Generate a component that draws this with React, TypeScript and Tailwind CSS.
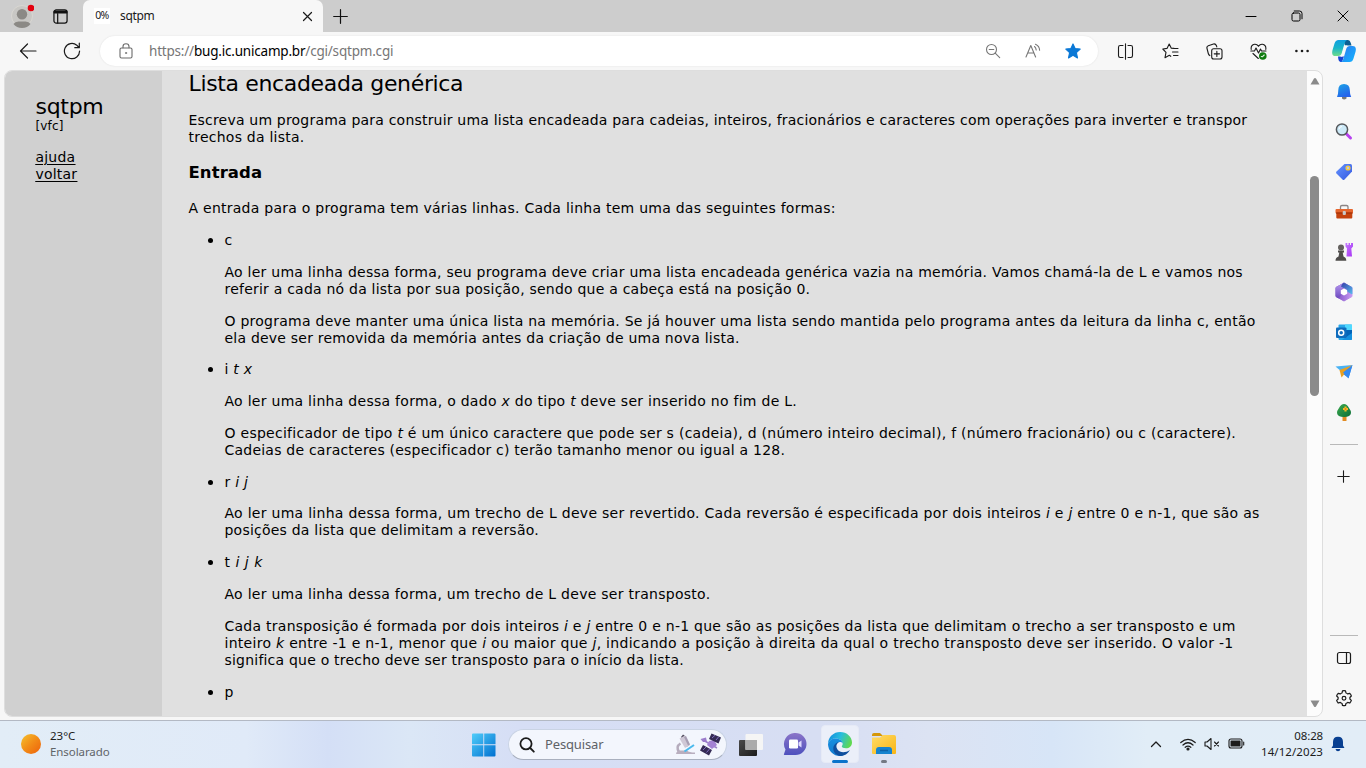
import React from "react";

type IconProps = { children: React.ReactNode; size?: number; box?: string; className?: string; sw?: number };

function Icon({ children, size = 16, box = "0 0 16 16", className = "", sw = 1.1 }: IconProps) {
  return (
    <svg
      width={size}
      height={size}
      viewBox={box}
      className={`shrink-0 ${className}`}
      fill="none"
      stroke="currentColor"
      strokeWidth={sw}
      strokeLinecap="round"
      strokeLinejoin="round"
    >
      {children}
    </svg>
  );
}

function TitleBar() {
  return (
    <div className="flex h-8 shrink-0 bg-[#cdcdcd]">
      <div className="flex w-[44px] items-center justify-center">
        <svg width="24" height="28" viewBox="0 0 24 28">
          <circle cx="12" cy="14" r="10.5" fill="#c8c7c4" stroke="#d9d7d2" />
          <circle cx="12" cy="12.3" r="5.2" fill="#8b8985" />
          <path d="M3.5 22Q5 19.500 8.500 19.500H15.500Q19 19.500 20.500 22Q17.500 26 12 26T3.500 22Z" fill="#8b8985" />
          <circle cx="21" cy="6" r="3.300" fill="#e3000f" />
        </svg>
      </div>
      <div className="flex w-[39px] items-center pl-[9px] text-[#111]">
        <Icon size={15} sw={1.3}>
          <rect x="1" y="1" width="14" height="14" rx="2.500" />
          <path d="M1.500 2.600H14.500M1.500 3.800H14.500" strokeWidth="2" />
          <path d="M5 5V15" />
        </Icon>
      </div>
      <div className="flex w-[240px] items-center rounded-t-[7px] bg-[#f7f7f7] pl-[11px] pr-[10px] text-[12px] text-[#1a1a1a]">
        <span className="flex h-4 w-4 items-center justify-center bg-white font-['Noto_Sans'] text-[10.500px] tracking-[-0.6px]">0%</span>
        <span className="ml-[10px] grow tracking-[-0.350px]">sqtpm</span>
        <Icon size={11} box="0 0 11 11" sw={1.200}>
          <path d="M1.500 1.500L9.500 9.500M9.500 1.500L1.500 9.500" />
        </Icon>
      </div>
      <div className="flex grow items-center pl-[10px] text-[#111]">
        <Icon size={15} box="0 0 15 15" sw={1.200}>
          <path d="M7.500 .7V14.300M.7 7.500H14.300" />
        </Icon>
      </div>
      <div className="flex items-center text-black">
        <div className="flex w-[46px] justify-center">
          <Icon size={12} box="0 0 12 12" sw={1}><path d="M1 6.500H11" /></Icon>
        </div>
        <div className="flex w-[46px] justify-center">
          <Icon size={12} box="0 0 12 12" sw={1}>
            <rect x="1" y="3" width="8" height="8" rx="1.500" />
            <path d="M3.200 1H8.500Q11 1 11 3.500V8.800" />
          </Icon>
        </div>
        <div className="flex w-[46px] justify-center">
          <Icon size={12} box="0 0 12 12" sw={1}><path d="M1 1L11 11M11 1L1 11" /></Icon>
        </div>
      </div>
    </div>
  );
}

function Cell({ w = "w-[44px]", children }: { w?: string; children: React.ReactNode }) {
  return <div className={`flex ${w} shrink-0 items-center justify-center`}>{children}</div>;
}

function CopilotLogo() {
  return (
    <svg width="24" height="24" viewBox="0 0 24 24" className="shrink-0">
      <defs>
        <linearGradient id="cpa" x1="0" y1="0" x2="0" y2="1">
          <stop offset="0" stopColor="#109fe0" />
          <stop offset=".5" stopColor="#19b5c9" />
          <stop offset="1" stopColor="#6fdc8a" />
        </linearGradient>
        <linearGradient id="cpb" x1="0" y1="0" x2="1" y2="1">
          <stop offset="0" stopColor="#2d7bf0" />
          <stop offset="1" stopColor="#12b4ff" />
        </linearGradient>
      </defs>
      <path d="M11 1H16Q18 1 18.800 4L19.500 6.500H13Z" fill="#0b5f93" />
      <path d="M6 17.500H12L10 23H8.500Q6.800 23 6.300 20Z" fill="#1745d4" />
      <path d="M6.500 1H15Q13.300 1.500 12.500 4.500L9.800 14Q9 17 6 17H3.500Q-.8 17 .4 11.500L2.500 4.500Q3.500 1 6.500 1Z" fill="url(#cpa)" />
      <path d="M17.500 23H9Q10.700 22.500 11.500 19.500L14.200 10Q15 7 18 7H20.500Q24.800 7 23.600 12.500L21.500 19.500Q20.500 23 17.500 23Z" fill="url(#cpb)" />
      <path d="M12.500 6.500H15.500Q14 7.500 13.300 10L11.600 16Q11 17.700 9.500 17.700H8.300Q9.300 17 10 14.500Z" fill="#f5fafc" />
    </svg>
  );
}

function Toolbar() {
  return (
    <div className="flex h-[38px] shrink-0 items-center bg-[#f7f7f7] pl-[6px] text-[#1b1b1b]">
      <Cell><Icon size={18} box="0 0 18 18" sw={1.200}><path d="M17 9H1.500M8.500 2L1.500 9L8.500 16" /></Icon></Cell>
      <Cell>
        <Icon size={18} box="0 0 18 18" sw={1.200}>
          <path d="M16.600 9A7.600 7.600 0 1 1 13.800 3.200L15.900 5.500M16.300 1.200V5.700H11.800" />
        </Icon>
      </Cell>
      <div className="ml-[6px] flex h-[30px] w-[998px] shrink-0 items-center rounded-full bg-white pl-[18px] pr-[5px] shadow-[0_0_2px_rgba(0,0,0,0.1)]">
        <Icon size={16} className="text-[#6b6b6b]">
          <rect x="2" y="5" width="12" height="10" rx="1.500" />
          <path d="M5 4.700V3.500Q5 .7 8 .7T11 3.500V4.700" />
          <circle cx="8" cy="10" r=".7" fill="currentColor" strokeWidth=".5" />
        </Icon>
        <span className="ml-[15px] grow whitespace-nowrap text-[13.500px] tracking-[-0.200px] text-[#767676]">
          https://<span className="text-black">bug.ic.unicamp.br</span>/cgi/sqtpm.cgi
        </span>
        <Cell w="w-[40px]">
          <Icon className="text-[#777]"><circle cx="6.500" cy="6.500" r="5" /><path d="M4.200 6.500H8.800M10.200 10.200L14.700 14.700" /></Icon>
        </Cell>
        <Cell w="w-[40px]">
          <Icon className="text-[#777]">
            <path d="M1 14L5.800 2.500L10.600 14M2.600 10H9M9.500 3.500Q11 4.700 11.200 7M10.500 1.200Q14.500 3 14.600 7.200" />
          </Icon>
        </Cell>
        <Cell w="w-[40px]">
          <Icon className="text-[#0a78d6]"><path fill="currentColor" d="M8 .9L10.100 5.500L15.200 6.100L11.400 9.600L12.500 14.900L8 12.300L3.500 14.900L4.600 9.600L.8 6.100L5.900 5.500Z" /></Icon>
        </Cell>
      </div>
      <div className="ml-[6px] flex">
        <Cell w="w-[43px]">
          <Icon size={17} box="0 0 17 17"><path d="M6 2.500H3.200Q1.500 2.500 1.500 4.200V12.800Q1.500 14.500 3.200 14.500H6M11 2.500H13.800Q15.500 2.500 15.500 4.200V12.800Q15.500 14.500 13.800 14.500H11M8.500 .7V16.300" /></Icon>
        </Cell>
        <Cell w="w-[45px]">
          <Icon size={17} box="0 0 17 17" className="ml-px">
            <path d="M12 5.400L9.300 5.200L7.200 1L5 5.400L.8 6L4 9.300L3 14.700L7.300 12.300L8.800 13.300M11.500 5.500H16M10.500 9H16M11.500 12.500H16" />
          </Icon>
        </Cell>
        <Cell>
          <Icon size={17} box="0 0 17 17">
            <rect x="5.700" y="5.700" width="10.300" height="10.300" rx="2" />
            <path d="M10.850 8.200V13.500M8.200 10.850H13.500M3.800 12.600Q2.700 12 2.300 10.500L.9 5Q.6 3.300 2.300 2.700L7.500 1Q9.500 .5 10.500 2.800L10.800 3.900" />
          </Icon>
        </Cell>
        <Cell>
          <Icon size={17} box="0 0 17 17">
            <path d="M1.200 6.500Q.6 2 4.500 1.300Q7 1 8.500 3.300Q10 1 12.500 1.300Q16.400 2 15.800 6.500M.8 8H4.500L6 5L8.500 10L10.500 6L11.500 8H16M3 10.500L8.300 15.500" />
            <circle cx="12.800" cy="13" r="3.800" fill="#107c10" stroke="none" />
            <path d="M11.300 13.500L12.300 13.800L14.200 12" stroke="#dff0df" />
          </Icon>
        </Cell>
        <Cell>
          <Icon><g fill="currentColor" stroke="none"><circle cx="2.400" cy="8" r="1.300" /><circle cx="8" cy="8" r="1.300" /><circle cx="13.600" cy="8" r="1.300" /></g></Icon>
        </Cell>
        <Cell w="w-[40px]"><CopilotLogo /></Cell>
      </div>
    </div>
  );
}

const p = "mb-[15px] whitespace-nowrap";
const tight = "mb-[14px] whitespace-nowrap";

function Article() {
  return (
    <div className="grow overflow-hidden bg-[#e0e0e0] pl-[26.500px] text-[14px] leading-[17px] tracking-[0.250px] text-black">
      <h1 className="-mt-px mb-[14px] text-[22px] leading-[28px] tracking-[-0.350px]">Lista encadeada genérica</h1>
      <p className="mb-[17px] whitespace-nowrap tracking-[0.200px]">
        Escreva um programa para construir uma lista encadeada para cadeias, inteiros, fracionários e caracteres com operações para inverter e transpor<br />
        <span className="tracking-[0.240px]">trechos da lista.</span>
      </p>
      <h2 className="mb-[17px] text-[16.500px] font-bold leading-[20px] tracking-[0.080px]">Entrada</h2>
      <p className={p}>A entrada para o programa tem várias linhas. Cada linha tem uma das seguintes formas:</p>
      <ul className="list-disc pl-[36px] marker:text-[17px] [&>li]:-mt-px">
        <li>
          <p className={p}>c</p>
          <p className={p}>
            Ao ler uma linha dessa forma, seu programa deve criar uma lista encadeada genérica vazia na memória. Vamos chamá-la de L e vamos nos<br />
            <span className="tracking-[0.220px]">referir a cada nó da lista por sua posição, sendo que a cabeça está na posição 0.</span>
          </p>
          <p className={tight}>
            O programa deve manter uma única lista na memória. Se já houver uma lista sendo mantida pelo programa antes da leitura da linha c, então<br />
            <span className="tracking-[0.220px]">ela deve ser removida da memória antes da criação de uma nova lista.</span>
          </p>
        </li>
        <li>
          <p className={p}>i <i>t x</i></p>
          <p className={`${p} tracking-[0.275px]`}>Ao ler uma linha dessa forma, o dado <i>x</i> do tipo <i>t</i> deve ser inserido no fim de L.</p>
          <p className={p}>
            <span className="tracking-[0.268px]">O especificador de tipo <i>t</i> é um único caractere que pode ser s (cadeia), d (número inteiro decimal), f (número fracionário) ou c (caractere).</span><br />
            <span className="tracking-[0.220px]">Cadeias de caracteres (especificador c) terão tamanho menor ou igual a 128.</span>
          </p>
        </li>
        <li>
          <p className={tight}>r <i>i j</i></p>
          <p className={p}>
            <span className="tracking-[0.280px]">Ao ler uma linha dessa forma, um trecho de L deve ser revertido. Cada reversão é especificada por dois inteiros <i>i</i> e <i>j</i> entre 0 e n-1, que são as</span><br />
            <span className="tracking-[0.220px]">posições da lista que delimitam a reversão.</span>
          </p>
        </li>
        <li>
          <p className={`${p} tracking-[0.500px]`}>t <i>i j k</i></p>
          <p className={`${p} tracking-[0.265px]`}>Ao ler uma linha dessa forma, um trecho de L deve ser transposto.</p>
          <p className={p}>
            <span className="tracking-[0.257px]">Cada transposição é formada por dois inteiros <i>i</i> e <i>j</i> entre 0 e n-1 que são as posições da lista que delimitam o trecho a ser transposto e um</span><br />
            <span className="tracking-[0.290px]">inteiro <i>k</i> entre -1 e n-1, menor que <i>i</i> ou maior que <i>j</i>, indicando a posição à direita da qual o trecho transposto deve ser inserido. O valor -1</span><br />
            <span className="tracking-[0.210px]">significa que o trecho deve ser transposto para o início da lista.</span>
          </p>
        </li>
        <li><p className={p}>p</p></li>
      </ul>
    </div>
  );
}

function Page() {
  return (
    <div className="ml-1 mb-[3px] flex w-[1319px] shrink-0 overflow-hidden rounded-[8px] border border-[#dedede] bg-[#fcfcfc] font-['DejaVu_Sans',sans-serif]">
      <div className="w-[157px] shrink-0 bg-[#d0d0d0] pl-[30.500px] pt-[22px] text-black">
        <div className="text-[22px] leading-[28px] tracking-[-0.300px]">sqtpm</div>
        <div className="-mt-px text-[12px] leading-[12px] tracking-[0.150px]">[vfc]</div>
        <div className="mt-[17px] flex flex-col items-start text-[14px] leading-[17px] tracking-[0.200px] underline underline-offset-2">
          <a>ajuda</a>
          <a>voltar</a>
        </div>
      </div>
      <Article />
      <div className="flex w-[15px] shrink-0 flex-col items-center justify-between pb-[8px] pt-[6px]">
        <svg width="10" height="8" viewBox="0 0 10 8"><path d="M.5 7.500L4 1.500Q5 .3 6 1.500L9.500 7.500Z" fill="#8b8b8b" /></svg>
        <div className="mt-[91px] mb-auto h-[220px] w-[9px] rounded-full bg-[#8b8b8b]" />
        <svg width="10" height="8" viewBox="0 0 10 8"><path d="M.5 .5L4 6.500Q5 7.700 6 6.500L9.500 .5Z" fill="#8b8b8b" /></svg>
      </div>
    </div>
  );
}

function Sidebar() {
  return (
    <div className="flex grow flex-col items-center pt-[2px] pr-px text-[#1b1b1b]">
      <svg width="20" height="360" viewBox="0 0 20 360" className="shrink-0">
        <defs>
          <linearGradient id="bell" x1="0" y1="0" x2=".5" y2="1"><stop stopColor="#1ca5e6" /><stop offset="1" stopColor="#2563eb" /></linearGradient>
          <linearGradient id="tag" x1="0" y1="0" x2="1" y2="1"><stop stopColor="#6594ff" /><stop offset="1" stopColor="#3558e0" /></linearGradient>
          <linearGradient id="rook" x1="0" y1="0" x2="1" y2="1"><stop stopColor="#c37bff" /><stop offset="1" stopColor="#a832f4" /></linearGradient>
          <linearGradient id="m1" x1="0" y1="0" x2="0" y2="1"><stop stopColor="#b79af0" /><stop offset="1" stopColor="#6f4cc0" /></linearGradient>
          <linearGradient id="m2" x1="0" y1="0" x2="1" y2="1"><stop stopColor="#3440a8" /><stop offset="1" stopColor="#55b9ed" /></linearGradient>
          <linearGradient id="m3" x1="0" y1="0" x2="1" y2="0"><stop stopColor="#7a4cc4" /><stop offset="1" stopColor="#c89af2" /></linearGradient>
          <linearGradient id="tree" x1="0" y1="0" x2="1" y2="1"><stop stopColor="#3caa50" /><stop offset="1" stopColor="#0b6e35" /></linearGradient>
        </defs>
        <g>
          <path d="M8 26.500Q10 28.500 12.500 26.500V25H8Z" fill="#777" />
          <path d="M3 25Q4.300 22 4.300 18Q4.300 12 10 12T15.800 18Q15.800 22 17.200 25Z" fill="url(#bell)" />
        </g>
        <g>
          <path d="M12 61.500L16.500 66" stroke="#b741ef" strokeWidth="3" strokeLinecap="round" />
          <circle cx="8" cy="57.500" r="5.600" fill="#cdeaf8" stroke="#55585c" strokeWidth="1.500" />
          <path d="M5 57Q5.500 54.500 8 54.500" stroke="#fff" fill="none" />
        </g>
        <g>
          <path d="M10.500 92H16.500Q18 92 18 93.500V99.500L10.500 107.500Q9.500 108.500 8.500 107.500L2.500 101.500Q1.500 100.500 2.500 99.500Z" fill="url(#tag)" />
          <circle cx="14" cy="96" r="1.900" fill="#b9c6f0" stroke="#f6cb3d" strokeWidth="1.400" />
        </g>
        <g>
          <path d="M6.500 137V134.800Q6.500 133.500 8 133.500H12.500Q14 133.500 14 134.800V137" fill="none" stroke="#8b8585" strokeWidth="1.300" />
          <rect x="1.500" y="137" width="17.500" height="4.500" rx="1" fill="#e6662e" />
          <rect x="2.300" y="140.500" width="16" height="6" rx="1" fill="#c4420e" />
          <path d="M2 141H18.500" stroke="#992c07" />
          <rect x="8.700" y="139" width="3.200" height="4" rx="1" fill="#c9c9c9" />
        </g>
        <g>
          <path d="M11.500 171V174.500L13 176.500L12.500 184.500H18L17.300 176.500L19 174.500V171H17V173H16V171H14.500V173H13.300V171Z" fill="url(#rook)" />
          <circle cx="7" cy="175.500" r="3" fill="#63605e" />
          <path d="M4 178.500H10V180.500H8.700L9.500 184.500Q12.300 185.500 12.300 188.800H1.500Q1.500 185.500 4.500 184.500L5.300 180.500H4Z" fill="#4e4c4a" />
        </g>
        <g>
          <path d="M10 211L18 215.500V224.500L10 229L2 224.500V215.500Z" fill="url(#m3)" stroke="url(#m3)" strokeWidth="1" strokeLinejoin="round" />
          <path d="M10 211L2 215.500V224.500L4.500 226L7 223V217L11.500 214Z" fill="url(#m1)" stroke="url(#m1)" strokeWidth=".8" strokeLinejoin="round" />
          <path d="M8.500 212L10 211L18 215.500V222L13 219V217L7.500 214.500Z" fill="url(#m2)" stroke="url(#m2)" strokeWidth=".8" strokeLinejoin="round" />
          <path d="M10 216.400L13.200 218.200V221.800L10 223.600L6.800 221.800V218.200Z" fill="#fff" />
        </g>
        <g>
          <rect x="4.500" y="252.500" width="13.500" height="15.500" rx="1" fill="#28a8ea" />
          <path d="M11 252.500H18V258H11Z" fill="#50d9ff" /><path d="M11 258H18V263L11 267Z" fill="#0364b8" />
          <path d="M8 268L18 261V267Q18 268 17 268Z" fill="#1490df" />
          <rect x="2" y="255.500" width="10.500" height="10.500" rx="1" fill="#0f6cbd" />
          <circle cx="7.200" cy="260.700" r="2.500" fill="none" stroke="#fff" strokeWidth="1.500" />
        </g>
        <g>
          <path d="M1.500 294.500L18.500 293L8 300Z" fill="#49b2f4" />
          <path d="M8 300L18.500 293L14.500 306L8.500 301.500Z" fill="#2785e8" />
          <path d="M5.500 298L18 293.300L7.500 305.500Z" fill="#e9a020" />
          <path d="M9 300.500L18.300 293.300L14.500 306.500Z" fill="#3389f1" />
        </g>
        <g>
          <rect x="8.500" y="344" width="4" height="5" rx=".6" fill="#e28b21" />
          <path d="M10 332Q13 332.200 15 336Q17 338.500 17 341Q16.500 345 10 345T3 341Q3 338.500 5 336Q7 332.200 10 332Z" fill="url(#tree)" />
          <path d="M11.500 334.500V339.500M9 337H14" stroke="#f5b824" strokeWidth="2.200" />
          <circle cx="11.500" cy="337" r=".8" fill="#cf6923" />
        </g>
      </svg>
      <div className="mt-[12px] h-px w-[28px] shrink-0 bg-[#b9b9b9]" />
      <Icon size={13} box="0 0 13 13" className="mt-[25px] mr-px"><path d="M6.500 .8V12.200M.8 6.500H12.200" /></Icon>
      <div className="mt-[152px] h-px w-[28px] shrink-0 bg-[#b9b9b9]" />
      <Icon size={16} className="mt-[14px]" sw={1.200}><rect x="1.500" y="2.500" width="13" height="11" rx="2" /><path d="M10.500 2.500V13.500" /></Icon>
      <Icon size={18} box="0 0 24 24" className="mt-[23px]" sw={1.600}>
        <path d="M10 2.500Q12 1.800 14 2.500L14.600 5.300Q16 5.700 17 6.600L19.700 5.800Q21.200 7.300 21.800 9.300L19.800 11.300Q20 12.300 19.800 13.300L21.800 15.200Q21.200 17.300 19.700 18.700L17 17.900Q16 18.900 14.600 19.300L14 22Q12 22.500 10 22L9.400 19.300Q8 18.900 7 17.900L4.300 18.700Q2.800 17.300 2.200 15.200L4.200 13.300Q4 12.300 4.200 11.300L2.200 9.300Q2.800 7.300 4.300 5.800L7 6.600Q8 5.700 9.400 5.300Z" />
        <circle cx="12" cy="12.200" r="2.500" />
      </Icon>
    </div>
  );
}

function Taskbar() {
  return (
    <div className="flex h-12 shrink-0 items-center border-t border-[#b3b9c4] bg-[linear-gradient(90deg,#e2edf7_0%,#e0eaf8_18%,#d4dff6_24%,#dbe7f6_30%,#d6def5_38%,#d7def3_60%,#dce3f3_68%,#d7e5f7_77%,#e1edf7_84%,#e2edf7_100%)] text-[12px] text-[#1b1b1b]">
      <div className="flex w-[472px] items-center pl-[21px] pb-[2px]">
        <div className="h-5 w-5 rounded-full bg-[linear-gradient(135deg,#f5c32f,#f28c17_50%,#ed610b)]" />
        <div className="ml-[9px] text-[11.500px] leading-4"><div>23°C</div><div className="tracking-[-0.080px] text-[#606468]">Ensolarado</div></div>
      </div>
      <svg width="24" height="24" viewBox="0 0 24 24" className="shrink-0">
        <defs><linearGradient id="win" x1="0" y1="0" x2="1" y2="1"><stop stopColor="#50cdfa" /><stop offset="1" stopColor="#0070d0" /></linearGradient></defs>
        <path fill="url(#win)" d="M1 .5H11.300V11.300H0V1.500Q0 .5 1 .5ZM12.200 .5H22.500Q23.500 .5 23.500 1.500V11.300H12.200ZM0 12.200H11.300V23.500H1Q0 23.500 0 22.500ZM12.200 12.200H23.500V22.500Q23.500 23.500 22.500 23.500H12.200Z" />
      </svg>
      <div className="ml-[12px] flex h-[31px] w-[219px] shrink-0 items-center rounded-full border border-[#c9d3e4] border-b-[#a9b0bf] bg-[#f3f6fd] pl-[10px] pr-px">
        <Icon size={16} sw={1.800}><circle cx="7" cy="6.800" r="5.600" /><path d="M11.200 11L14.800 14.700" /></Icon>
        <span className="ml-[10px] grow text-[13px] tracking-[-0.150px] text-[#5e6267]">Pesquisar</span>
        <svg width="50" height="26" viewBox="0 0 50 26" className="shrink-0">
          <path d="M6 5L8 2.500L10 4L14 13L11.500 15Z" fill="#4f4a5c" />
          <path d="M4.500 6.500L10 3.500L15 13L10 16Z" fill="#cfc8d6" />
          <path d="M9 5L11 4L15 12.500L13 13.500Z" fill="#a79eb3" />
          <path d="M5.500 11.500Q.5 14.500 4 20" fill="none" stroke="#b5acbd" strokeWidth="2.500" />
          <path d="M1 22Q1.500 18.500 5 18.500H12Q14 20.500 20 20.500V22Z" fill="#b9afbf" />
          <path d="M9.500 19.500L19 13" stroke="#49b9ed" strokeWidth="2" />
          <path d="M28 8L42 16" stroke="#9c83c8" strokeWidth="1.500" />
          <path d="M34 9L39 8L42 13L37 17L32 13Z" fill="#a483d4" /><path d="M25.500 7L31 5.500L32 10L28 10Z" fill="#9b7ccb" />
          <path d="M36.500 1.500L46 5.500L43.500 11.500L34 7ZM28 13L37 18L34 23.500L25 18.500Z" fill="#352b55" />
          <path d="M37 6L40 3.300M41 8L43.500 5M28 18L31 15M31.500 20.500L34.500 17" stroke="#816fc0" />
        </svg>
      </div>
      <div className="ml-px flex w-[45px] shrink-0 justify-center">
        <svg width="24" height="24" viewBox="0 0 24 24">
          <defs><linearGradient id="tv" x1="0" y1="0" x2="1" y2="1"><stop stopColor="#4a4a4a" /><stop offset="1" stopColor="#1c1c1c" /></linearGradient></defs>
          <rect x="0" y="7" width="18" height="16" rx="1" fill="url(#tv)" /><rect x="6.500" y="1" width="17.500" height="16" rx="1" fill="#f5f5f5" /><rect x="6.500" y="7" width="11.500" height="10" fill="#ababab" />
        </svg>
      </div>
      <div className="flex w-[48px] shrink-0 justify-center pr-[4px]">
        <svg width="24" height="24" viewBox="0 0 24 24">
          <defs><linearGradient id="chat" x1="0" y1="0" x2="0" y2="1"><stop stopColor="#8b75c8" /><stop offset="1" stopColor="#4d50bd" /></linearGradient></defs>
          <path d="M12.500 0A11 11 0 1 1 12.500 22H1.500Q.5 22 1 21L2.500 16.500A11 11 0 0 1 12.500 0Z" fill="url(#chat)" />
          <rect x="6" y="6.500" width="9" height="9" rx="1.300" fill="#fff" /><path d="M15.500 9.500L18.500 7.500V14.500L15.500 12.500Z" fill="#dedbff" />
        </svg>
      </div>
      <div className="mb-px flex h-[38px] w-[38px] shrink-0 flex-col items-center rounded-[4px] border border-[#e6eaf6] bg-[#ebeff9] pt-[6px]">
        <svg width="24" height="24" viewBox="0 0 24 24" className="shrink-0">
          <defs>
            <linearGradient id="eg" x1="0" y1=".2" x2="1" y2=".5"><stop stopColor="#118cde" /><stop offset=".5" stopColor="#28bddd" /><stop offset="1" stopColor="#5fd94f" /></linearGradient>
            <linearGradient id="eb" x1="0" y1="0" x2="0" y2="1"><stop stopColor="#178fe0" /><stop offset="1" stopColor="#1279cd" /></linearGradient>
          </defs>
          <path d="M0 11.500A12 12 0 0 1 12 0C19 0 24 5 24 10.500C24 14.200 21.200 16.300 18 16.300C15.300 16.300 13.800 15.400 13.800 14.600C13.800 14 14.700 13.500 14.700 11.800C14.700 9 11.800 6.500 7.500 6.500C4 6.500 1.500 8.500 0 11.500Z" fill="url(#eg)" />
          <path d="M0 12C1 8.500 4 6.500 7.500 6.500C11.800 6.500 14.700 9 14.700 11.500C13.500 9.800 11 9.600 9.300 11.200C6 14.300 8 21.500 15.500 23.500Q13.800 24 12 24A12 12 0 0 1 0 12Z" fill="url(#eb)" />
          <path d="M11.500 10C8.300 11 7.500 14.500 9.500 17.500C12 21 17.500 21 22 18C19.800 21.700 16.500 24 12.500 24C8 23.500 5.300 20 5.300 16.500C5.300 13 8.300 10 11.500 10Z" fill="#0f4f9e" />
        </svg>
        <div className="mt-[4px] h-[3px] w-4 shrink-0 rounded-full bg-[#0a73cb]" />
      </div>
      <div className="ml-[12px] flex shrink-0 flex-col items-center pt-[5px]">
        <svg width="26" height="24" viewBox="0 0 26 24">
          <defs><linearGradient id="fd" x1="0" y1="0" x2="1" y2="1"><stop stopColor="#ffdc68" /><stop offset="1" stopColor="#f9b514" /></linearGradient></defs>
          <path d="M1 3Q1 1 3 1H9L12 4H1Z" fill="#d59708" /><path d="M1 5.500H9L12 3H23Q25 3 25 5V21Q25 22 24 22H2Q1 22 1 21Z" fill="url(#fd)" />
          <path d="M5 22V18Q5 15 8 15H18Q21 15 21 18V22Z" fill="#1583cf" /><path d="M9 18.500H17" stroke="#0c62a7" strokeWidth="1.500" />
        </svg>
        <div className="mt-[4px] h-[3px] w-[6px] rounded-full bg-[#737984]" />
      </div>
      <div className="ml-auto flex items-center pr-[21px] pb-[2px]">
        <Icon size={12} box="0 0 12 12" className="mr-[18px]" sw={1.300}><path d="M1.500 8.500L6 4L10.500 8.500" /></Icon>
        <Icon size={16} className="mr-[8px]" sw={1.200}>
          <path d="M.8 6.500Q8 .2 15.200 6.500M3 9Q8 4.500 13 9M5.200 11.300Q8 9 10.800 11.300" /><circle cx="8" cy="13" r="1" fill="currentColor" />
        </Icon>
        <Icon size={16} className="mr-[8px]"><path d="M1 6H3L7 2.500V13.500L3 10H1ZM10.500 6L14.500 10M14.500 6L10.500 10" /></Icon>
        <Icon size={17} box="0 0 17 16" className="mr-[16px]">
          <rect x="1" y="3.500" width="13" height="9" rx="2" /><rect x="2.500" y="5" width="10" height="6" rx=".5" fill="currentColor" stroke="none" /><path d="M15.700 6.500V9.500" />
        </Icon>
        <div className="text-right text-[11.500px] leading-4 tracking-[0.080px]"><div className="tracking-[-0.150px]">08:28</div><div>14/12/2023</div></div>
        <svg width="14" height="16" viewBox="0 0 14 16" className="ml-[8px] mt-px"><path d="M.5 12L2 9.500V6Q2 .8 7 .8T12 6V9.500L13.500 12Z" fill="#083f91" /><path d="M4.500 13H9.500Q9 15.200 7 15.200T4.500 13Z" fill="#083f91" /></svg>
      </div>
    </div>
  );
}

export default function App() {
  return (
    <div className="flex h-[768px] w-[1366px] flex-col overflow-hidden bg-[#f7f7f7] font-['Noto_Sans',sans-serif]">
      <TitleBar />
      <Toolbar />
      <div className="flex h-[650px] shrink-0">
        <Page />
        <Sidebar />
      </div>
      <Taskbar />
    </div>
  );
}
